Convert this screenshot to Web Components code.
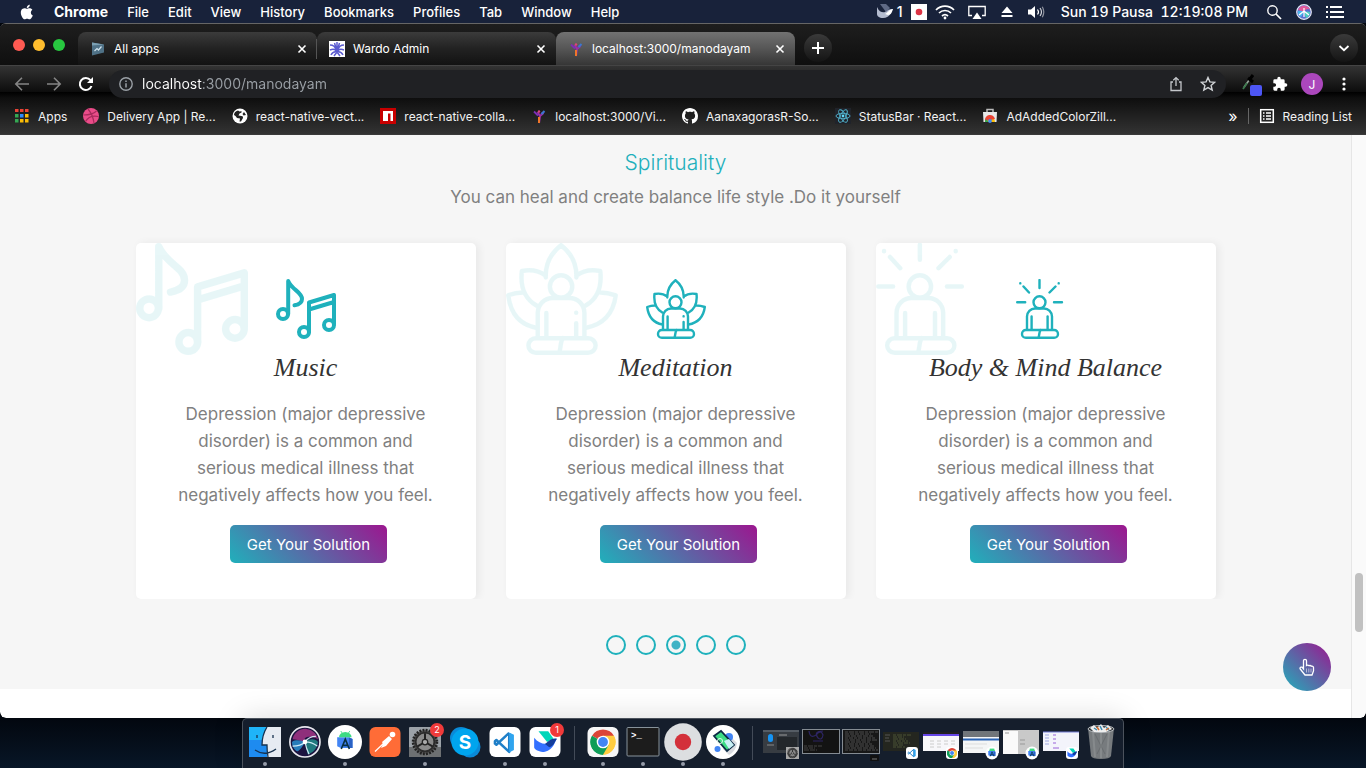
<!DOCTYPE html>
<html lang="en">
<head>
<meta charset="utf-8">
<title>localhost:3000/manodayam</title>
<style>
  html, body { margin: 0; height: 100%; }
  body { font-family: Inter, "Liberation Sans", sans-serif; font-size: 12px; color: #fff; background: #06111f; overflow: hidden; }
</style>
</head>
<body>
<mac-desktop></mac-desktop>

<script>
/* ---------- drawings ---------- */
const CHROME = `<circle cx="12" cy="12" r="11" fill="#fff"/>
  <path d="M12 12L2.5 6.5A11 11 0 0 1 21.5 6.5z" fill="#db4437"/>
  <path d="M12 12L21.5 6.5A11 11 0 0 1 12 23z" fill="#ffcd40"/>
  <path d="M12 12L12 23A11 11 0 0 1 2.5 6.5z" fill="#0f9d58"/>
  <path d="M12 6.5H21.5A11 11 0 0 1 12 23L17 14z" fill="#ffcd40"/>
  <path d="M7.2 14.8L2.5 6.5A11 11 0 0 0 12 23L16.8 14.8z" fill="#0f9d58"/>
  <circle cx="12" cy="12" r="5.5" fill="#fff"/><circle cx="12" cy="12" r="4.3" fill="#4285f4"/>`;
const VSCODE = `<path d="M16.500 2v20L3 9.500l-1.500 1.200v2.600L3 14.500 16.500 2" fill="none" stroke="#1f7fc8" stroke-width="2.600" stroke-linejoin="round"/><path d="M16.500 1.500L21.500 4v16l-5 2.500z" fill="#2fa4ee"/>`;
const STUDIO = `<path d="M3 7h13l4 2v10H7l-4-2z" fill="#4285f4"/><path d="M16 7l4 2v10h-4z" fill="#2a62c4"/><path d="M5 7a7 6 0 0 1 14 0z" fill="#3ddc84"/><path d="M7.500 20L12 9l4.500 11M9 16h6" fill="none" stroke="#073042" stroke-width="1.800"/><path d="M7 0l2 3M17 0l-2 3" stroke="#3ddc84"/>`;
const BIRD = `<path d="M6 2h9l5 7-6 3z" fill="#00d6b9"/><path d="M2 8c4 5 10 7 13 5 3-3 5-4 8-4-2 3-3 10-11 12C7 22 2 19 2 17z" fill="#3370ff"/><path d="M12 14c4-3 6-6 11-5-2 3-3 7-7 8z" fill="#133c9a"/>`;
const GEAR = `<circle cx="12" cy="12" r="9.500" fill="#555" stroke="#222" stroke-width="2.200" stroke-dasharray="1.500 1"/><circle cx="12" cy="12" r="7.500" fill="#8a8a8a" stroke="#2b2b2b" stroke-width="1.500"/><path d="M12 12V5M12 12l6 3.500M12 12l-6 3.500" stroke="#222" stroke-width="1.600"/><circle cx="12" cy="12" r="2.200" fill="#aaa" stroke="#222"/>`;
const SIRI = `<circle cx="12" cy="12" r="11" fill="#1c1440" stroke="#e8e8ee" stroke-width="1.200"/>
  <path d="M3 10C4 5 9 2 13 2.500 18 3 21 7 21.500 10 16 7 10 8 12 12 8 11 5 10 3 10z" fill="#b5388f" opacity=".75"/>
  <path d="M2.500 12c3-2 7-1 9.500 0-2 4-5 8-6.500 6.500A9 9 0 0 1 2.500 12z" fill="#2a8fd0" opacity=".85"/>
  <path d="M12 12c4-3 8-2 9.500 0-.5 5-4 8-7.500 9z" fill="#24a59a" opacity=".7"/>
  <path d="M3 15q6 0 9-3 3-4 8-4M12 12q1 5 3 9M12 12q5 0 9 3" stroke="#dff6ff" stroke-width=".9" opacity=".9" fill="none"/><circle cx="12" cy="12" r="1.700" fill="#fff"/>`;
const FIGURE = `<circle cx="29.500" cy="23.300" r="6"/><path d="M17 50.500V37.500a8 8 0 0 1 8-8h9a8 8 0 0 1 8 8v13M21.600 37.500V50"/><rect x="12" y="51" width="36" height="7.800" rx="3.900"/><path d="M30.500 51c-1.500 2-1 5-2 7.800"/>`;
const PERSON_Y = `<path d="M6.500 4l2.500 4 3.500-3M9 8l-1 7" stroke="#9b2fa5" stroke-width="2" fill="none"/><path d="M3 3.500l4 4M10 6l3-2" stroke="#7b2fb5" stroke-width="1.800"/><path d="M10.500 6l3-3" stroke="#3a78d0" stroke-width="2"/><circle cx="8" cy="3.500" r="1.200" fill="#e0447a"/><path d="M8 9v6" stroke="#f0762a" stroke-width="2"/>`;
const lines = (x, y, n, w, c) => Array.from({length: n}, (_, i) => `<path d="M${x} ${y + i * 2}h${w - (i * 7) % 9}" stroke="${c}" stroke-width="1" stroke-dasharray="${3 + i % 3} 1 ${5 - i % 2} 1"/>`).join('');

const ICONS = {
  apple: ['0 0 24 24', `<path d="M17.100 12.700c0-2.500 2-3.700 2.100-3.800-1.200-1.700-3-1.900-3.600-2-1.500-.2-3 .9-3.700.9-.8 0-2-.9-3.300-.9-1.700 0-3.200 1-4.100 2.500-1.700 3-.4 7.500 1.300 9.900.8 1.200 1.800 2.500 3.100 2.500 1.200-.1 1.700-.8 3.200-.8s1.900.8 3.200.8c1.300 0 2.200-1.200 3-2.400 1-1.400 1.300-2.700 1.400-2.800-.1 0-2.600-1-2.600-3.900zM14.700 5.300c.7-.8 1.100-2 1-3.100-1 0-2.200.7-2.900 1.500-.6.700-1.200 1.800-1 2.900 1.100.1 2.200-.5 2.900-1.300z" fill="#fff"/>`],
  swallow: ['0 0 16 16', `<path d="M0 3c2 5 6 6 8 5 2-2 4-3 8-3-2 3-3 9-10 9-4 0-6-2-6-4z" fill="#b4bccf"/><path d="M3 0h6l4 4-4 4z" fill="#5f6a85"/><path d="M8 10c3-1 4-5 8-5-1 3-2 6-5 6z" fill="#fff"/>`],
  flag: ['0 0 16 16', `<path d="M0 0h16v16H0z" fill="#fff"/><circle cx="8" cy="8" r="3.300" fill="#dc3345"/>`],
  wifi: ['0 0 20 16', `<g fill="none" stroke="#fff" stroke-width="1.700"><path d="M1 6a12.500 12.500 0 0 1 18 0M4 9a8.500 8.500 0 0 1 12 0M7 12a4.500 4.500 0 0 1 6 0"/></g><circle cx="10" cy="14" r="1.400" fill="#fff"/>`],
  airplay: ['0 0 20 16', `<path d="M5 11.500H1.800V2.500h16.400v9H15" fill="none" stroke="#fff" stroke-width="1.300"/><path d="M10 8.500l4.500 6.500h-9z" fill="#fff"/>`],
  eject: ['0 0 16 16', `<path d="M8 2.500l5.500 6.500h-11zM2.500 11h11v2h-11z" fill="#fff"/>`],
  volume: ['0 0 18 16', `<path d="M1 5.500h3L8 2v12l-4-3.500H1z" fill="#fff"/><g fill="none" stroke="#fff" stroke-width="1.200"><path d="M10.500 5.500q2 2.500 0 5"/><path d="M13 4q3 4 0 8" opacity=".8"/><path d="M15.300 2.800q3 5.200 0 10.400" opacity=".5"/></g>`],
  search: ['0 0 16 16', `<circle cx="6.500" cy="6.500" r="4.700" fill="none" stroke="#fff" stroke-width="1.400"/><path d="M10 10l5 5" stroke="#fff" stroke-width="1.700"/>`],
  sirimenu: ['0 0 16 16', `<circle cx="8" cy="8" r="7.300" fill="#5a6fd0" stroke="#e6e8f4" stroke-width="1.200"/><path d="M2 6a6.500 6.500 0 0 1 12-.5Q10 4 8 8z" fill="#e05a9c"/><path d="M2 7q3-1 6 1l-3 5Q1.500 11 2 7z" fill="#46b6ee"/><path d="M8 8q4-1 6 0 0 4-4 6z" fill="#4fd0c0"/><path d="M3 11l5-4 5 4M8 4v9" stroke="#fff" fill="none" stroke-width="1.200"/>`],
  list: ['0 0 18 16', `<path d="M0 3h2M0 8h2M0 13h2M4 3h12M4 8h14M4 13h14" stroke="#fff" stroke-width="1.800"/>`],
  close: ['0 0 16 16', `<path d="M4.500 4.500l7 7M11.500 4.500l-7 7" stroke="#fff" stroke-width="1.600"/>`],
  plus: ['0 0 16 16', `<path d="M8 2v12M2 8h12" stroke="#fff" stroke-width="2"/>`],
  chevron: ['0 0 16 16', `<path d="M3.500 6L8 10.200 12.500 6" fill="none" stroke="#fff" stroke-width="1.800"/>`],
  play: ['0 0 16 16', `<path d="M2 1.500l12 2v8L2 14.500z" fill="#4f7186"/><path d="M2 1.500l12 2-12 1z" fill="#7ca0b3"/><path d="M4.500 10l2.500-2.500 1.500 1.500 3-3.500" fill="none" stroke="#cfe3ee" stroke-width="1.200"/>`],
  lotusblue: ['0 0 16 16', `<path d="M0 0h16v16H0z" fill="#fff"/><g fill="none" stroke="#5b5bd0" stroke-width="1.500"><path d="M8 1v6M5.500 2l1.500 5M10.500 2L9 7M1 4q5 0 6 5M15 4q-5 0-6 5M1 9q4-2 7 1 3-3 7-1M2 14q2-4 6-3 4-1 6 3M5 15l3-4 3 4"/></g><circle cx="8" cy="8.500" r="2.200" fill="#5b5bd0"/>`],
  mano: ['0 0 16 16', PERSON_Y],
  back: ['0 0 16 16', `<path d="M15 8H2M8 1.800L1.800 8 8 14.200" fill="none" stroke="#858585" stroke-width="1.600"/>`],
  forward: ['0 0 16 16', `<path d="M1 8h13M8 1.800L14.200 8 8 14.200" fill="none" stroke="#858585" stroke-width="1.600"/>`],
  reload: ['0 0 16 16', `<path d="M13.500 10A6 6 0 1 1 12.500 4.200" fill="none" stroke="#fff" stroke-width="2"/><path d="M15 1v6H9z" fill="#fff"/>`],
  info: ['0 0 16 16', `<circle cx="8" cy="8" r="6.200" fill="none" stroke="#9aa0a6" stroke-width="1.400"/><path d="M8 7.200V11.500M8 4.500v1.500" stroke="#9aa0a6" stroke-width="1.500"/>`],
  share: ['0 0 16 16', `<path d="M5 6H3v8.500h10V6h-2M8 10V2M5.300 4.300L8 1.600l2.700 2.700" fill="none" stroke="#c4c7cb" stroke-width="1.300"/>`],
  star: ['0 0 16 16', `<path d="M8 1.500l1.900 4.400 4.800.4-3.600 3.100 1.100 4.700L8 11.600l-4.200 2.500 1.100-4.700L1.300 6.300l4.800-.4z" fill="none" stroke="#d0d3d6" stroke-width="1.400"/>`],
  dropper: ['0 0 24 24', `<path d="M6 15l6-8" stroke="#9aa89e" stroke-width="1.600"/><path d="M5 17l4-6" stroke="#3d7a4e" stroke-width="1.800"/><path d="M10 6l5 4M12 7l3-4" stroke="#000" stroke-width="3"/><rect x="12" y="13" width="12" height="11" rx="2" fill="#4d56f5"/>`],
  puzzle: ['0 0 24 24', `<path d="M20.500 11H19V7a2 2 0 0 0-2-2h-4V3.500a2.500 2.500 0 0 0-5 0V5H4a2 2 0 0 0-2 2v3.800h1.500a2.700 2.700 0 0 1 0 5.400H2V20a2 2 0 0 0 2 2h3.800v-1.500a2.700 2.700 0 0 1 5.400 0V22H17a2 2 0 0 0 2-2v-4h1.500a2.500 2.500 0 0 0 0-5z" fill="#fff"/>`],
  more: ['0 0 16 16', `<g fill="#fff"><circle cx="8" cy="3" r="1.600"/><circle cx="8" cy="8" r="1.600"/><circle cx="8" cy="13" r="1.600"/></g>`],
  apps: ['0 0 16 16', `<path d="M1 1h3.500v3H1zM6 1h3.500v3H6zM11 1h3.500v3H11z" fill="#ea4335"/><path d="M1 6h3.500v3.500H1z" fill="#34a853"/><path d="M6 6h3.500v3.500H6z" fill="#2d8cff"/><path d="M11 6h3.500v3.500H11z" fill="#fbbc05"/><path d="M1 11h3.500v3.500H1z" fill="#34a853"/><path d="M6 11h3.500v3.500H6zM11 11h3.500v3.500H11z" fill="#fbbc05"/>`],
  dribbble: ['0 0 16 16', `<circle cx="8" cy="8" r="8" fill="#ea4c89"/><g fill="none" stroke="#a82a5c" stroke-width="1.200"><path d="M5 1q5 6 6 14M0.500 7q9 0 13-4M2.500 13.500q4-7 13-5"/></g>`],
  globe: ['0 0 16 16', `<circle cx="8" cy="8" r="7.500" fill="#fff"/><path d="M2 7q0-3.500 4-4.500l1.500 1q3-1 2 1L7.500 5.500l-1 2L9.500 8q2 0 1.500 2l-2 3.500H7.500l.5-3L5 10 3.500 8z" fill="#222"/><path d="M12 4l2 3-2.500.5L10.500 6z" fill="#222"/>`],
  npm: ['0 0 16 16', `<path d="M0 0h16v16H0z" fill="#c80000"/><path d="M3 3h10v10h-2.500V5.500H8V13H3z" fill="#fff"/>`],
  github: ['0 0 16 16', `<path fill="#fff" d="M8 0C3.580 0 0 3.580 0 8c0 3.540 2.290 6.530 5.470 7.590.4.070.55-.17.55-.38 0-.19-.01-.82-.01-1.490-2.010.37-2.530-.49-2.690-.94-.09-.23-.48-.94-.82-1.130-.28-.15-.68-.52-.01-.53.63-.01 1.080.58 1.230.82.72 1.210 1.870.87 2.330.66.070-.52.28-.87.51-1.070-1.780-.2-3.640-.89-3.640-3.950 0-.87.31-1.590.82-2.150-.08-.2-.36-1.020.08-2.120 0 0 .67-.21 2.200.82.64-.18 1.320-.27 2-.27s1.360.090 2 .27c1.530-1.040 2.200-.82 2.200-.82.44 1.100.16 1.920.08 2.120.51.56.82 1.270.82 2.150 0 3.070-1.870 3.750-3.650 3.950.29.25.54.73.54 1.480 0 1.070-.01 1.930-.01 2.200 0 .21.15.46.55.38A8 8 0 0 0 16 8c0-4.420-3.580-8-8-8z"/>`],
  react: ['0 0 16 16', `<path d="M0 0h16v16H0z" fill="#20232a"/><g fill="none" stroke="#52b6d0" stroke-width=".9"><ellipse cx="8" cy="8" rx="7" ry="2.700"/><ellipse cx="8" cy="8" rx="7" ry="2.700" transform="rotate(60 8 8)"/><ellipse cx="8" cy="8" rx="7" ry="2.700" transform="rotate(120 8 8)"/></g><circle cx="8" cy="8" r="1.400" fill="#61dafb"/>`],
  store: ['0 0 16 16', `<path d="M5 4V1.500h6V4" fill="none" stroke="#bbb" stroke-width="1.500"/><path d="M1 4h14l-.5 10h-13z" fill="#e8e8e8"/><path d="M3 14a5 5 0 0 1 10 0z" fill="#fbbc05"/><path d="M3 13a5 5 0 0 1 10-2l-5 1z" fill="#ea4335"/><path d="M3 14a5 5 0 0 1 .8-3l3 3z" fill="#34a853"/><circle cx="8" cy="13" r="1.900" fill="#4285f4"/>`],
  reading: ['0 0 16 16', `<rect x="1.700" y="1.700" width="12.600" height="12.600" fill="none" stroke="#fff" stroke-width="1.500"/><path d="M4 5h1.500M4 8h1.500M4 11h1.500M7 5h5M7 8h5M7 11h5" stroke="#fff" stroke-width="1.400"/>`],
  hand: ['0 0 24 24', `<path d="M8.500 14V5.800a1.500 1.500 0 0 1 3 0V10.500q1.300-.8 2.600.2 1.300-.6 2.400.5 1.700-.3 2 1.200V16l-1.500 4H10l-5-6.300q0-2 2-1.500z" fill="none" stroke="#fff" stroke-width="1.300"/><path d="M11.500 13.500v4M13.800 13.500v4M16 13.500v4" stroke="#fff" opacity=".55"/>`],

  music: ['0 0 60 60', `<g fill="none" stroke="#1fb1bc" stroke-width="4" stroke-linecap="round" stroke-linejoin="round"><circle cx="7" cy="35" r="5"/><path d="M12.200 35V2C16 11 26 13 26 20q0 5-7.500 6.300"/><circle cx="28" cy="53" r="5"/><path d="M33 53V23.500L58 16v29M33 30.500L58 23"/><circle cx="53" cy="46" r="5"/></g>`],
  meditation: ['0 0 60 60', `<g fill="none" stroke="#1fb1bc" stroke-width="2.400" stroke-linecap="round" stroke-linejoin="round">${FIGURE}<path d="M37.600 43v7M37.600 37.300v.1M21.300 18.500C21 11 24 5.500 29.500 1.200 35 5.500 38 11 37.700 18.500M21.300 17.500Q16 13.500 8.500 15q-1.500 13 7.800 18.500M37.700 17.500Q43 13.500 50.500 15q1.500 13-7.800 18.500M9 26.500Q5 26.500 1.200 28 3 43 16.500 45.500M50.500 26.500q4 0 8.300 1.500-2 15-16.300 17.500"/></g>`],
  balance: ['0 0 60 60', `<g fill="none" stroke="#1fb1bc" stroke-width="2.400" stroke-linecap="round" stroke-linejoin="round"><g transform="translate(-6 0)">${FIGURE}<path d="M37.600 37.500V50"/></g><path d="M23.500 1v8M1.200 23.300h8M38 23.300h8M7.500 7.500l5.500 6M39.500 7.500l-6 6M4.300 4.300v.1M42.700 4.300v.1"/></g>`],

  finder: ['0 0 40 40', `<path d="M4 5h32v30H4z" fill="#e6ebf2"/><path d="M4 5h18q-5 8-5 18h5v12H4z" fill="#1e8bf0"/><path d="M4 5h18q-4 6-4.600 13H4z" fill="#1fb4f8"/><path d="M22 5q-5 8-5 18h5q0 6 1 12M10 28q10 7 21-1M12 13v3M28 13v3" fill="none" stroke="#17324f" stroke-width="1.300"/>`],
  siridock: ['0 0 40 40', `<g transform="translate(3.500 3.500) scale(1.370)">${SIRI}</g>`],
  studio: ['0 0 40 40', `<circle cx="20" cy="20" r="17" fill="#fff"/><g transform="translate(9.500 9) scale(.9)">${STUDIO}</g>`],
  postman: ['0 0 40 40', `<rect x="4.500" y="5" width="31" height="30" rx="6" fill="#ff6c37"/><path d="M10 29.500L19 21" stroke="#fff" stroke-width="1.200"/><path d="M17 20l7-6 3 3-6 7-5 2 2-4z" fill="#fff"/><circle cx="27.500" cy="12.500" r="2.800" fill="#fff"/>`],
  settings: ['0 0 40 40', `<rect x="4" y="5" width="32" height="30" rx="1" fill="#9ca2a8"/><path d="M4 25h32v10H4z" fill="#6d7072"/><g transform="translate(5 5) scale(1.250)">${GEAR}</g>`],
  skype: ['0 0 40 40', `<circle cx="16" cy="16" r="11" fill="#0a8ad8"/><circle cx="25" cy="25" r="10.500" fill="#0a8ad8"/><circle cx="20" cy="20" r="13.500" fill="#00a5ee"/><text x="20" y="27" text-anchor="middle" font-family="Inter, sans-serif" font-size="19" font-weight="700" fill="#fff">S</text>`],
  code: ['0 0 40 40', `<rect x="4.500" y="5" width="31" height="30" rx="6" fill="#fff"/><g transform="translate(8.500 9) scale(.95)">${VSCODE}</g>`],
  lark: ['0 0 40 40', `<rect x="4.500" y="5" width="31" height="30" rx="6" fill="#fff"/><g transform="translate(7 7) scale(1.080)">${BIRD}</g>`],
  chrome: ['0 0 40 40', `<rect x="4.500" y="5" width="31" height="30" rx="6" fill="#f6f6f6"/><g transform="translate(6.200 6.200) scale(1.150)">${CHROME}</g>`],
  terminal: ['0 0 40 40', `<rect x="4" y="5.500" width="32" height="28.500" rx="1" fill="#1c1c1c" stroke="#87929a"/><text x="8" y="16" font-family="Liberation Mono, monospace" font-size="9" font-weight="700" fill="#fff">&gt;_</text>`],
  record: ['0 0 40 40', `<circle cx="20" cy="20" r="18.800" fill="#dcdee0"/><circle cx="20" cy="20" r="8.200" fill="#d3303a"/>`],
  scrcpy: ['0 0 40 40', `<circle cx="20" cy="20" r="17" fill="#fff"/><path d="M24 11l10 10q-1 8-8 12l-6-6z" fill="#d9dbe0"/><circle cx="26" cy="15" r="4" fill="#4285f4"/><circle cx="14.500" cy="27" r="3" fill="#4285f4"/><path d="M11 14l7-5 13 14-7 6z" fill="#3ddc84" stroke="#0c2b45" stroke-width="1.800"/><path d="M21 19l5-2 5 6-5 4z" fill="#c9f0f5"/><circle cx="17" cy="19" r="2.500" fill="none" stroke="#dffbe9"/>`],
  win1: ['0 0 40 40', `<path d="M2 8h36v23H2z" fill="#373c42"/><path d="M16 15h20v13H16z" fill="#23272b"/><path d="M2 8h36v2H2z" fill="#555c64"/><rect x="7" y="12" width="5" height="8" rx="2.500" fill="#1594f5"/><path d="M6 23h7" stroke="#888"/><path d="M18 13h8" stroke="#999"/><rect x="25" y="25" width="13" height="12" fill="#a8a8a8"/><g transform="translate(25.500 25) scale(.5)">${GEAR}</g>`],
  win2: ['0 0 40 40', `<rect x="1.500" y="7.500" width="37" height="24" fill="#131313" stroke="#848b92"/><path d="M8 9q1 8 7 4 5-6 7 0-1 6-5 3-5-7 5-7M12 19h10" fill="none" stroke="#2d2563" stroke-width="1.200"/>${lines(3, 24, 3, 18, '#444')}`],
  win3: ['0 0 40 40', `<rect x="1.500" y="7.500" width="37" height="24" fill="#171717" stroke="#848b92"/>${lines(4, 10, 10, 33, '#4c4c4c')}<rect x="29" y="33" width="9" height="6" rx="1" fill="#111"/><path d="M31 37h5" stroke="#777"/>`],
  win4: ['0 0 40 40', `<path d="M2 10h36v19H2z" fill="#24261f"/>${lines(12, 13, 7, 18, '#4b5236')}<path d="M4 13h5M4 16h4M4 19h5" stroke="#555"/><rect x="25" y="25" width="12" height="12" rx="3" fill="#fff"/><g transform="translate(26.500 26.500) scale(.38)">${VSCODE}</g>`],
  win5: ['0 0 40 40', `<path d="M2 10h36v19H2z" fill="#f7f7fa"/><path d="M2 10h36v2H2z" fill="#222"/><path d="M2 13h36" stroke="#6547e8" stroke-width="2"/><path d="M9 19h25M9 22h25M9 25h14" stroke="#ccc" stroke-dasharray="4 3"/><rect x="25" y="25" width="12" height="12" rx="3" fill="#fff"/><g transform="translate(25.500 25.500) scale(.46)">${CHROME}</g>`],
  win6: ['0 0 40 40', `<path d="M2 9h36v22H2z" fill="#f4f5f6"/><path d="M2 9h36v6H2z" fill="#70757a"/><path d="M2 17.500h36" stroke="#2b65b5" stroke-width="2"/><path d="M4 22h22M4 26h18" stroke="#ddd"/><circle cx="31" cy="31" r="6.500" fill="#fff"/><g transform="translate(26 26) scale(.42)">${STUDIO}</g>`],
  win7: ['0 0 40 40', `<path d="M2 8h36v24H2z" fill="#c9c9c9"/><path d="M2 9h15v23H2z" fill="#fafafa"/><path d="M4 11h4M19 18h5M19 22h5" stroke="#999"/><circle cx="31" cy="31" r="6.500" fill="#fff"/><g transform="translate(26 26) scale(.42)">${STUDIO}</g>`],
  win8: ['0 0 40 40', `<path d="M2 10h36v19H2z" fill="#f3f4fb"/><path d="M2 10h36" stroke="#777fd8"/><path d="M4 13h4M4 16h4M4 19h4M4 22h4" stroke="#9fa8e0"/><path d="M12 13h3M12 17h3M12 21h3M12 26h6" stroke="#9a62d8"/><rect x="25" y="25" width="12" height="12" rx="3" fill="#fff"/><g transform="translate(25.500 25.500) scale(.46)">${BIRD}</g>`],
  trash: ['0 0 40 40', `<path d="M7 6h26l-3 28q-1 3-10 3t-10-3z" fill="#777b7e"/><path d="M12 10l2 25M28 10l-2 25M20 11v25" stroke="#96999b" stroke-width="2" opacity=".5"/><path d="M14 12l10 20M26 12L16 32" stroke="#55595c" opacity=".4"/><ellipse cx="20" cy="7" rx="13" ry="3.500" fill="#34383b" stroke="#b8bcc0"/><path d="M9 6l4-3 3 3 4-4 3 4 4-3 4 4-6 3H13z" fill="#eee"/><path d="M13 6l3 2M19 4l2 4M25 5l3 3" stroke="#3b8bb0" stroke-width="1.500"/><path d="M16 5l2 3M28 6l-3 2" stroke="#d06a2c" stroke-width="1.500"/>`]
};

/* ---------- base class: clones a template into an open root ---------- */
class View extends HTMLElement {
  connectedCallback() {
    if (this.shadowRoot) return;
    const t = document.createElement('template');
    t.innerHTML = this.render();
    this.attachShadow({ mode: 'open' }).append(t.content.cloneNode(true));
  }
  at(n, d = '') { return this.getAttribute(n) ?? d; }
}
const BTN = `button { font: inherit; color: inherit; background: none; border: 0; padding: 0; margin: 0; display: flex; align-items: center; justify-content: center; }`;

customElements.define('ui-icon', class extends View {
  render() {
    const [box, body] = ICONS[this.at('name')];
    const w = this.at('size', '16'), h = this.at('height', w);
    return `<style>:host { display: block; flex: none; width: ${w}px; height: ${h}px; } svg { display: block; width: 100%; height: 100%; }</style>
      <svg viewBox="${box}" aria-hidden="true">${body}</svg>`;
  }
});

customElements.define('menu-bar', class extends View {
  render() {
    const menus = ['File', 'Edit', 'View', 'History', 'Bookmarks', 'Profiles', 'Tab', 'Window', 'Help'];
    return `<style>
      :host { display: flex; align-items: center; justify-content: space-between; height: 23px; padding: 0 22px 0 18px; background: #18223a; font-size: 14px; font-weight: 500; }
      nav, div { display: flex; align-items: center; }
      nav { gap: 19px; font-size: 13px; } nav ui-icon { margin-right: -1px; }
      .status, .wide { gap: 12px; }
      .wide { margin-right: 4px; }
      .near { gap: 8px; }
      .count { gap: 4px; }
      time { white-space: pre; font-variant-numeric: tabular-nums; }
      .tail { gap: 14px; margin-left: 6px; }
      ${BTN}
      button.app { font-size: 14px; font-weight: 700; }
    </style>
    <nav aria-label="Menu bar"><ui-icon name="apple" size="18"></ui-icon><button class="app">Chrome</button>${menus.map(m => `<button>${m}</button>`).join('')}</nav>
    <div class="status">
      <div class="near"><div class="count"><ui-icon name="swallow"></ui-icon><span>1</span></div>
      <ui-icon name="flag"></ui-icon><ui-icon name="wifi" size="20" height="16"></ui-icon></div>
      <div class="wide"><ui-icon name="airplay" size="20" height="16"></ui-icon><ui-icon name="eject"></ui-icon><ui-icon name="volume" size="18" height="16"></ui-icon></div>
      <time>Sun 19 Pausa  12:19:08 PM</time>
      <div class="tail"><ui-icon name="search"></ui-icon><ui-icon name="sirimenu"></ui-icon><ui-icon name="list" size="18" height="16"></ui-icon></div>
    </div>`;
  }
});

customElements.define('browser-tab', class extends View {
  render() {
    return `<style>
      :host { display: flex; align-items: center; box-sizing: border-box; flex: 0 1 239px; height: 33px; padding: 0 7px 0 12px; gap: 8px; border-radius: 8px 8px 0 0;
        background: linear-gradient(#3b3b3b, #222 50%, #121212); }
      :host([active]) { background: linear-gradient(#727272, #565656 50%, #363636); }
      .title { flex: 1; white-space: nowrap; }
      ${BTN}
    </style>
    <ui-icon name="${this.at('icon')}"></ui-icon><span class="title"><slot></slot></span>
    <button aria-label="Close tab"><ui-icon name="close"></ui-icon></button>`;
  }
});

customElements.define('tab-strip', class extends View {
  render() {
    return `<style>
      :host { display: flex; align-items: flex-end; height: 41px; padding: 0 8px 0 13px; background: linear-gradient(#1e1e1e, #0f0f0f); }
      .lights { display: flex; gap: 8px; align-self: center; margin-right: 13px; }
      .rule { width: 1px; height: 20px; margin: 0 0 6px -1px; background: #555; }
      ${BTN}
      .lights button { width: 12px; height: 12px; border-radius: 50%; }
      button.r { background: #ff5a52; } button.y { background: #ffbd2e; } button.g { background: #28c840; }
      button.round { width: 28px; height: 28px; margin-bottom: 3px; border-radius: 50%; background: linear-gradient(#3a3a3a, #141414); }
      button.new { margin-left: 9px; } button.all { margin-left: auto; }
    </style>
    <div class="lights"><button class="r" aria-label="Close"></button><button class="y" aria-label="Minimise"></button><button class="g" aria-label="Zoom"></button></div>
    <browser-tab icon="play">All apps</browser-tab><span class="rule"></span>
    <browser-tab icon="lotusblue">Wardo Admin</browser-tab>
    <browser-tab icon="mano" active>localhost:3000/manodayam</browser-tab>
    <button class="round new" aria-label="New tab"><ui-icon name="plus"></ui-icon></button>
    <button class="round all" aria-label="Search tabs"><ui-icon name="chevron"></ui-icon></button>`;
  }
});

customElements.define('tool-bar', class extends View {
  render() {
    return `<style>
      :host { display: flex; align-items: center; gap: 16px; box-sizing: border-box; height: 33px; padding: 4px 14px 0; border-top: 1px solid #444; background: linear-gradient(#333, #0c0c0c 26px, #000 26px, #0e0e0e); }
      ${BTN}
      .box { flex: 1; display: flex; align-items: center; gap: 8px; box-sizing: border-box; height: 28px; margin: 0 -4px 0 -1px; padding: 0 10px 0 9px; border-radius: 14px; background: #202124; }
      input { flex: 1; min-width: 0; height: 24px; border: 0; padding: 0; outline: 0; font: inherit; font-size: 14px; line-height: 24px;
        background: linear-gradient(90deg, #fff 61px, #9aa0a6 61px); -webkit-background-clip: text; background-clip: text; -webkit-text-fill-color: transparent; color: #9aa0a6; }
      button.share { margin-right: 8px; }
      .ext { display: flex; align-items: center; gap: 13px; }
      button.pick { margin-right: -3px; }
      button.me { width: 22px; height: 22px; border-radius: 50%; background: #ab47bc; }
    </style>
    <button aria-label="Back"><ui-icon name="back"></ui-icon></button>
    <button aria-label="Forward"><ui-icon name="forward"></ui-icon></button>
    <button aria-label="Reload"><ui-icon name="reload"></ui-icon></button>
    <div class="box"><ui-icon name="info"></ui-icon><input aria-label="Address" value="localhost:3000/manodayam" spellcheck="false">
      <button class="share" aria-label="Share"><ui-icon name="share"></ui-icon></button><button aria-label="Bookmark"><ui-icon name="star"></ui-icon></button></div>
    <div class="ext"><button class="pick" aria-label="Colour picker"><ui-icon name="dropper" size="24"></ui-icon></button>
      <button aria-label="Extensions"><ui-icon name="puzzle"></ui-icon></button><button class="me">J</button><button aria-label="More"><ui-icon name="more"></ui-icon></button></div>`;
  }
});

customElements.define('book-mark', class extends View {
  render() {
    return `<style>:host { display: block; flex: none; } a { display: flex; align-items: center; gap: 8px; color: #f2f2f2; text-decoration: none; white-space: nowrap; }</style>
      <a href="#"><ui-icon name="${this.at('icon')}"></ui-icon><span><slot></slot></span></a>`;
  }
});

customElements.define('bookmark-bar', class extends View {
  render() {
    return `<style>
      :host { display: flex; align-items: center; gap: 16px; box-sizing: border-box; height: 37px; padding: 0 14px; background: linear-gradient(#0e0e0e, #333); border-bottom: 1px solid #3a3a3a; }
      .end { display: flex; align-items: center; gap: 10px; margin-left: auto; }
      .rule { width: 1px; height: 16px; background: #666; }
      ${BTN}
      button { font-size: 16px; line-height: 16px; }
    </style>
    <book-mark icon="apps">Apps</book-mark><book-mark icon="dribbble">Delivery App | Re...</book-mark><book-mark icon="globe">react-native-vect...</book-mark>
    <book-mark icon="npm">react-native-colla...</book-mark><book-mark icon="mano">localhost:3000/Vi...</book-mark><book-mark icon="github">AanaxagorasR-So...</book-mark>
    <book-mark icon="react">StatusBar · React...</book-mark><book-mark icon="store">AdAddedColorZill...</book-mark>
    <div class="end"><button aria-label="More bookmarks">»</button><span class="rule"></span><book-mark icon="reading">Reading List</book-mark></div>`;
  }
});

customElements.define('solution-card', class extends View {
  render() {
    return `<style>
      :host { display: flex; flex-direction: column; align-items: center; position: relative; box-sizing: border-box; padding: 36px; border-radius: 5px; background: #fff; text-align: center;
        box-shadow: 3px 0 8px rgba(0,0,0,.06); clip-path: inset(-10px -12px 0 -10px); }
      .mark { position: absolute; left: 0; top: 0; opacity: .1; }
      h3 { margin: 12px -20px 16px; font: italic 400 26px/34px "Apple Chancery", "Liberation Serif", serif; color: #333; }
      p { margin: 0; font-size: 17px; line-height: 27px; color: #808080; }
      button { margin: 16px 0 0 6px; height: 38px; padding: 0 17px; border: 0; border-radius: 5px; font: inherit; font-size: 15px; color: #fff; white-space: nowrap; background: linear-gradient(45deg, #20b0bb, #9c168f); }
    </style>
    <ui-icon class="mark" name="${this.at('icon')}" size="112"></ui-icon>
    <ui-icon name="${this.at('icon')}" size="60"></ui-icon>
    <h3>${this.at('heading')}</h3><p><slot></slot></p><button>Get Your Solution</button>`;
  }
});

customElements.define('page-view', class extends View {
  render() {
    const text = 'Depression (major depressive disorder) is a common and serious medical illness that negatively affects how you feel.';
    return `<style>
      :host { display: flex; flex: 1; min-height: 0; overflow: hidden; position: relative; background: #fff; border-radius: 0 0 6px 6px; }
      main { flex: 1; min-width: 0; }
      section { display: flex; flex-direction: column; align-items: center; padding: 13px 24px 34px; background: #f6f6f6; }
      h2 { margin: 0 0 6px; font-size: 21px; font-weight: 300; line-height: 30px; color: #1fb0bc; }
      .lead { margin: 0 0 32px; font-size: 17px; line-height: 27px; color: #808080; }
      .cards { display: grid; grid-template-columns: repeat(3, 1fr); gap: 30px; width: 100%; max-width: 1080px; }
      .dots { display: flex; gap: 10px; margin-top: 36px; }
      .dots input { appearance: none; box-sizing: border-box; width: 20px; height: 20px; margin: 0; border: 2px solid #1fb1bc; border-radius: 50%; }
      .dots input:checked { background: radial-gradient(circle, #41b3c5 4px, transparent 5px); }
      .bar { display: grid; grid-template-rows: 438fr 59fr 86fr; box-sizing: border-box; width: 15px; padding: 0 3px; border-left: 1px solid #e6e6e6; background: #fafafa; }
      .bar span { grid-row: 2; border-radius: 4px; background: #c1c1c1; }
      .fab { position: absolute; right: 35px; bottom: 27px; width: 48px; height: 48px; padding: 0; border: 0; border-radius: 50%; display: grid; place-items: center; background: linear-gradient(45deg, #20b0bb, #9c168f); }
    </style>
    <main><section>
      <h2>Spirituality</h2><p class="lead">You can heal and create balance life style .Do it yourself</p>
      <div class="cards">
        <solution-card icon="music" heading="Music">${text}</solution-card>
        <solution-card icon="meditation" heading="Meditation">${text}</solution-card>
        <solution-card icon="balance" heading="Body &amp;amp; Mind Balance">${text}</solution-card>
      </div>
      <div class="dots">${[1, 2, 3, 4, 5].map(n => `<input type="radio" name="slide" aria-label="Slide ${n}"${n === 3 ? ' checked' : ''}>`).join('')}</div>
    </section></main>
    <div class="bar"><span></span></div>
    <button class="fab" aria-label="Quick action"><ui-icon name="hand" size="24"></ui-icon></button>`;
  }
});

customElements.define('chrome-window', class extends View {
  render() {
    return `<style>:host { display: flex; flex-direction: column; flex: 1; min-height: 0; overflow: hidden; border-top: 1px solid #666; border-radius: 6px; }</style>
      <tab-strip></tab-strip><tool-bar></tool-bar><bookmark-bar></bookmark-bar><page-view></page-view>`;
  }
});

customElements.define('dock-item', class extends View {
  render() {
    return `<style>
      :host { display: flex; flex-direction: column; align-items: center; position: relative; width: 40px; }
      .run { width: 4px; height: 4px; border-radius: 50%; background: #959ba8; }
      .badge { position: absolute; left: 25px; top: 1px; width: 14px; height: 14px; border-radius: 50%; background: #f03a3a; font-size: 9px; line-height: 14px; text-align: center; }
    </style><ui-icon name="${this.at('icon')}" size="40"></ui-icon>
    ${this.hasAttribute('open') ? '<span class="run"></span>' : ''}${this.at('badge') ? `<span class="badge">${this.at('badge')}</span>` : ''}`;
  }
});

customElements.define('mac-dock', class extends View {
  render() {
    const item = s => { const [n, o, b] = s.split(':'); return `<dock-item icon="${n}"${o ? ' open' : ''}${b ? ` badge="${b}"` : ''}></dock-item>`; };
    const apps = ['finder:1', 'siridock', 'studio:1', 'postman', 'settings:1:2', 'skype', 'code:1', 'lark:1:1'];
    const extra = ['chrome:1', 'terminal:1', 'record:1', 'scrcpy:1'];
    const wins = ['win1', 'win2', 'win3', 'win4', 'win5', 'win6', 'win7', 'win8', 'trash'];
    return `<style>
      :host { display: flex; align-self: center; position: relative; z-index: 1; box-sizing: border-box; height: 50px; padding: 3px 2px 0; border: 1px solid #4b525c; border-bottom: 0; border-radius: 5px 5px 0 0; background: #151e2c; box-shadow: 0 0 30px rgba(0,0,0,.15); }
      .rule { width: 1px; height: 34px; margin: 4px 8px 0 9px; background: #434b58; }
    </style>${apps.map(item).join('')}<span class="rule"></span>${extra.map(item).join('')}<span class="rule"></span>${wins.map(item).join('')}`;
  }
});

customElements.define('mac-desktop', class extends View {
  render() {
    return `<style>:host { display: flex; flex-direction: column; height: 100vh; background: linear-gradient(#02060d 93%, #081627); }</style>
      <menu-bar></menu-bar><chrome-window></chrome-window><mac-dock></mac-dock>`;
  }
});
</script>
</body>
</html>
